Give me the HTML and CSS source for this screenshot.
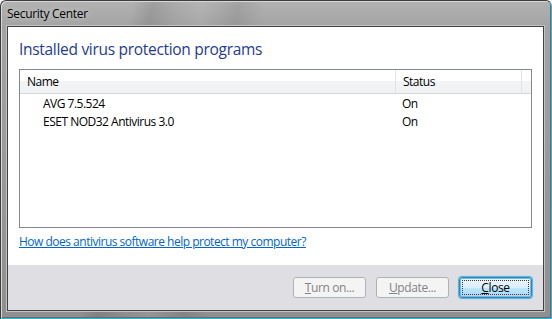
FILE: index.html
```html
<!DOCTYPE html>
<html>
<head>
<meta charset="utf-8">
<link rel="stylesheet" href="styles.css">
</head>
<body>
<div class="window">
  <div class="titlebar"><span class="title">Security Center</span></div>
  <div class="client">
    <div class="content">
      <h1 class="heading">Installed virus protection programs</h1>
      <div class="listbox">
        <div class="list-header">
          <div class="col col-name">Name</div>
          <div class="col col-status">Status</div>
          <div class="col col-rest"></div>
        </div>
        <div class="row">
          <div class="cell cell-name">AVG 7.5.524</div>
          <div class="cell cell-status">On</div>
        </div>
        <div class="row">
          <div class="cell cell-name">ESET NOD32 Antivirus 3.0</div>
          <div class="cell cell-status">On</div>
        </div>
      </div>
      <a class="help-link" href="#">How does antivirus software help protect my computer?</a>
    </div>
    <div class="footer">
      <button class="btn btn-disabled"><u>T</u>urn on...</button>
      <button class="btn btn-disabled"><u>U</u>pdate...</button>
      <button class="btn btn-default"><span class="focus"><u>C</u>lose</span></button>
    </div>
  </div>
</div>
</body>
</html>
```

FILE: styles.css
```css
html, body {
  margin: 0;
  padding: 0;
  background: #ffffff;
}
body {
  font-family: "Open Sans", "Noto Sans", sans-serif;
  font-size: 12px;
  color: #000;
}
.window {
  box-sizing: border-box;
  width: 552px;
  height: 319px;
  display: flex;
  flex-direction: column;
  border: 1px solid #3c3c3c;
  border-right-color: #2fb6da;
  border-bottom-color: #2fb6da;
  border-radius: 6px 6px 0 0;
  background:
    linear-gradient(100deg, rgba(255,255,255,0) 0px, rgba(255,255,255,0) 130px, rgba(0,0,0,0.10) 150px, rgba(0,0,0,0.02) 175px, rgba(255,255,255,0.05) 200px, rgba(0,0,0,0.08) 235px, rgba(255,255,255,0) 260px),
    linear-gradient(180deg, #b2b2b2 0px, #a3a3a3 26px, #8f8f8f 100%);
  box-shadow: inset 1px 1px 0 #d8d8d8, inset -1px -1px 0 #6a6a6a;
  padding: 0 7px 7px 6px;
}
.titlebar {
  height: 25px;
  display: flex;
  align-items: center;
  flex: none;
}
.title {
  font-size: 12px;
  color: #000;
  letter-spacing: -0.3px;
  text-shadow: 0 0 6px rgba(255,255,255,0.7);
}
.client {
  flex: 1;
  display: flex;
  flex-direction: column;
  border: 1px solid #404040;
  background: #fff;
  box-shadow: 0 0 0 1px #c4c4c4;
}
.content {
  flex: 1;
  padding: 11px 11px 0 11px;
  display: flex;
  flex-direction: column;
}
.heading {
  margin: 0;
  font-size: 15.5px;
  font-weight: normal;
  color: #1e3b94;
  line-height: 22px;
  letter-spacing: -0.3px;
  height: 31px;
}
.listbox {
  box-sizing: border-box;
  height: 159px;
  border: 1px solid #828790;
  background: #fff;
}
.list-header {
  display: flex;
  height: 23px;
  border-bottom: 1px solid #d5d5d5;
  background: linear-gradient(180deg, #ffffff 0%, #ffffff 45%, #f3f4f6 50%, #f0f1f3 100%);
}
.col {
  box-sizing: border-box;
  display: flex;
  align-items: center;
  padding-left: 7px;
  border-right: 1px solid #e2e3e5;
  line-height: 14px;
  letter-spacing: -0.5px;
}
.col-name { width: 376px; }
.col-status { width: 126px; }
.col-rest { flex: 1; border-right: none; }
.row {
  display: flex;
  height: 18px;
  align-items: center;
}
.cell { letter-spacing: -0.5px; box-sizing: border-box; }
.cell-name { width: 382px; padding-left: 23px; }
.help-link {
  margin-top: 7px;
  color: #0066cc;
  text-decoration: underline;
  letter-spacing: -0.5px;
  line-height: 14px;
  align-self: flex-start;
}
.footer {
  height: 45px;
  box-sizing: border-box;
  background: #dfdfe3;
  display: flex;
  justify-content: flex-end;
  align-items: flex-start;
  padding: 12px 11px 0 0;
  gap: 10px;
}
.btn {
  box-sizing: border-box;
  width: 73px;
  height: 21px;
  font-family: "Open Sans", "Noto Sans", sans-serif;
  font-size: 12px;
  letter-spacing: -0.4px;
  padding: 0;
  border-radius: 3px;
  display: flex;
  align-items: center;
  justify-content: center;
}
.btn-disabled {
  border: 1px solid #adb2b5;
  background: #f4f4f4;
  color: #838383;
}
.btn-default {
  border: 1px solid #3c7fb1;
  background: linear-gradient(180deg, #eaf6fd 0%, #d9f0fc 50%, #bee6fd 51%, #a7d9f5 100%);
  box-shadow: 0 0 0 1px #64c3ea inset, 0 0 1px 1px #46b5e4;
  color: #000;
  padding: 2px;
}
.focus {
  flex: 1;
  align-self: stretch;
  display: flex;
  align-items: center;
  justify-content: center;
  border: 1px dotted #7a1e1e;
}
.btn u { text-decoration: underline; }
```
